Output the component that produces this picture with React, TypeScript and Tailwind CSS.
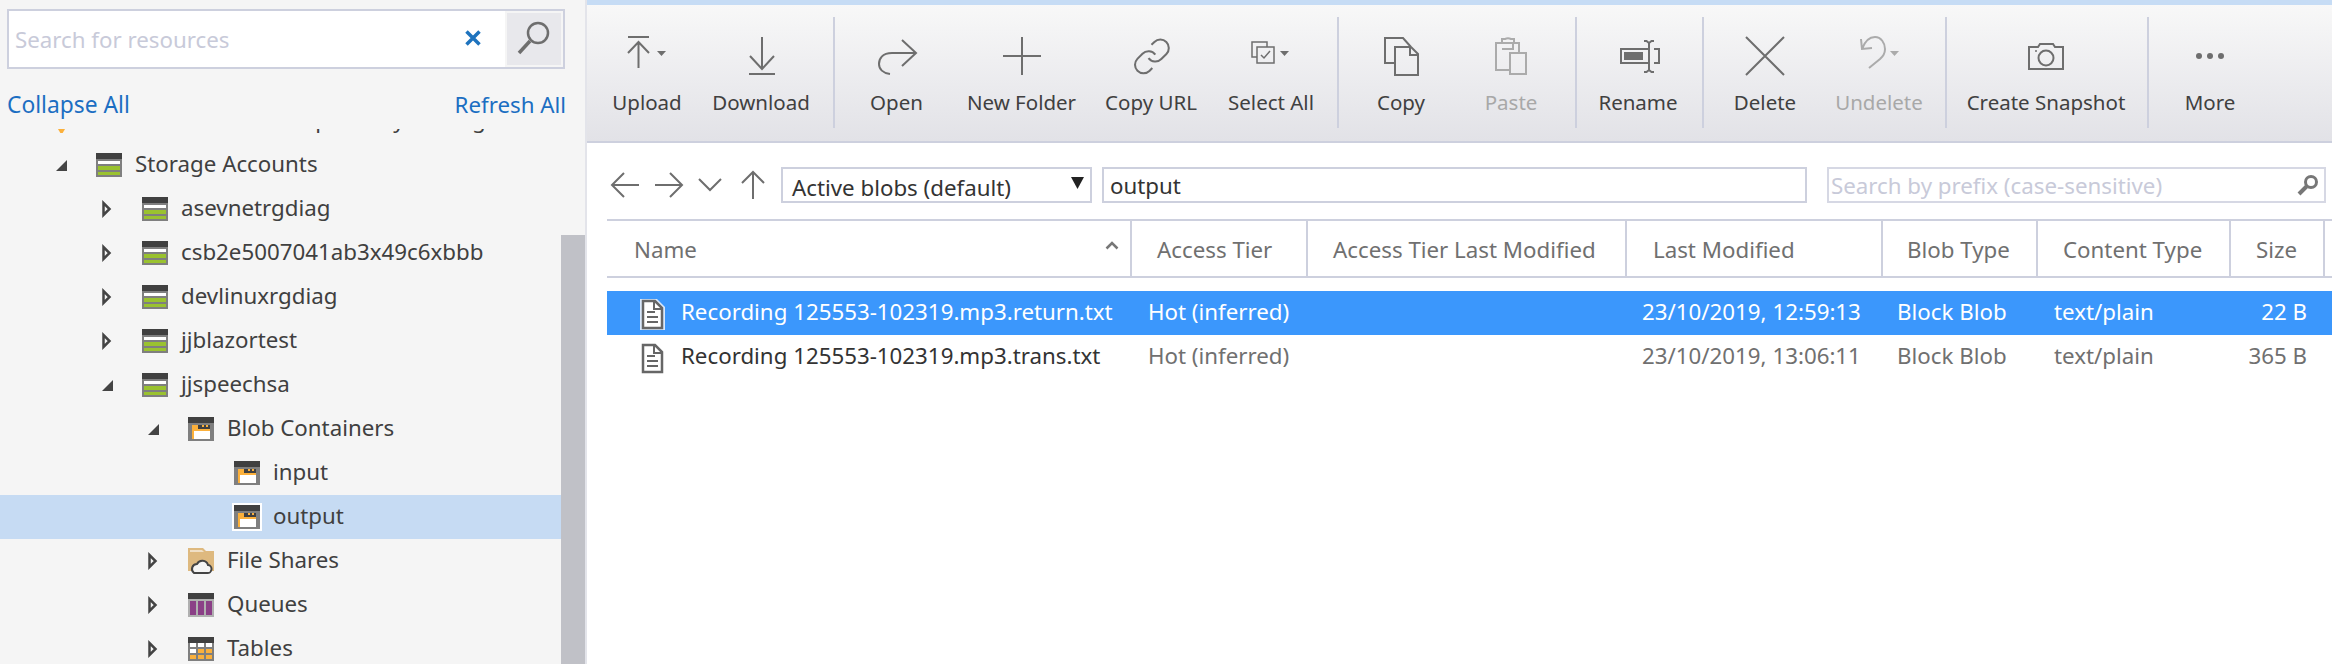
import React from 'react';

const TB = '#6e6e6e';
const DIS = '#ababab';

const Caret = ({ x, color = TB }: { x: number; color?: string }) => (
  <path d={`M${x} 17h9l-4.5 5z`} fill={color} stroke="none" />
);

const ToolIcon = ({ children, color = TB }: { children: React.ReactNode; color?: string }) => (
  <svg width="60" height="44" viewBox="0 0 60 44" fill="none" stroke={color} strokeWidth="2">
    {children}
  </svg>
);

const icons: Record<string, React.ReactNode> = {
  upload: (
    <ToolIcon>
      <path d="M11 3h21M21.5 8v26M11 19 21.5 8 32 19" />
      <Caret x={40} />
    </ToolIcon>
  ),
  download: (
    <ToolIcon>
      <path d="M31 3v32M19 22l12 13 12-13M18 40h26" />
    </ToolIcon>
  ),
  open: (
    <ToolIcon>
      <path d="M35 6l14 13-14 13M49 19H25C15 19 12 25 12 30c0 5 4 9 11 10" />
    </ToolIcon>
  ),
  folder: (
    <ToolIcon>
      <path d="M11 22h38M30 3v38" />
    </ToolIcon>
  ),
  link: (
    <ToolIcon>
      <g transform="translate(10.500 2) scale(1.7)" strokeWidth="1.2">
        <path d="M10 13a5 5 0 0 0 7.54.54l3-3a5 5 0 0 0-7.07-7.07l-1.72 1.71" />
        <path d="M14 11a5 5 0 0 0-7.54-.54l-3 3a5 5 0 0 0 7.07 7.07l1.71-1.71" />
      </g>
    </ToolIcon>
  ),
  select: (
    <ToolIcon>
      <path d="M16 23h-5V8h15v5" strokeWidth="1.5" />
      <rect x="16" y="13" width="17" height="16" strokeWidth="1.5" />
      <path d="M20 21l3 3 6-7" strokeWidth="1.5" />
      <Caret x={39} />
    </ToolIcon>
  ),
  copy: (
    <ToolIcon>
      <path d="M24 29H14V4h18l8 9M24 41V13h16l7 7v21zM39 13v8h8" />
    </ToolIcon>
  ),
  paste: (
    <ToolIcon color={DIS}>
      <path d="M29 36H15V9h23v10M21 9V5h3a5 3 0 0 1 6 0h3v4M21 15h11V9M29 19h16v21H29z" />
    </ToolIcon>
  ),
  rename: (
    <ToolIcon>
      <path d="M40 15H13v14h27M46 15h5v14h-5M41 8v29M36 7h2.500l2.500 2 2.500-2H46M36 38h2.500l2.500-2 2.500 2H46" />
      <rect x="16" y="18" width="19" height="8" fill={TB} stroke="none" />
    </ToolIcon>
  ),
  delete: (
    <ToolIcon>
      <path d="M11 3l38 38M49 3 11 41" />
    </ToolIcon>
  ),
  undelete: (
    <ToolIcon color={DIS}>
      <path d="M12 5l1 10 10-1M13 15c3-8 8-12 13-12 6 0 10 6 10 12 0 5-2 7-5 10l-11 9" />
      <Caret x={41} color={DIS} />
    </ToolIcon>
  ),
  camera: (
    <ToolIcon>
      <path d="M13 13h9l2-3h13l2 3h8v22H13z" />
      <circle cx="30" cy="24" r="7.500" />
      <circle cx="20" cy="17" r="1" fill={TB} stroke="none" />
    </ToolIcon>
  ),
  more: (
    <ToolIcon>
      <g fill={TB} stroke="none">
        <circle cx="19" cy="22" r="3" />
        <circle cx="30" cy="22" r="3" />
        <circle cx="41" cy="22" r="3" />
      </g>
    </ToolIcon>
  ),
};

const toolGroups = [
  { pad: 'border-r-2 pr-[18px]', items: [
    { label: 'Upload', icon: 'upload', w: 'w-[120px]' },
    { label: 'Download', icon: 'download', w: 'w-[108px]' },
  ] },
  { pad: 'border-r-2 pr-[12px]', items: [
    { label: 'Open', icon: 'open', w: 'w-[123px]' },
    { label: 'New Folder', icon: 'folder', w: 'w-[127px]' },
    { label: 'Copy URL', icon: 'link', w: 'w-[132px]' },
    { label: 'Select All', icon: 'select', w: 'w-[108px]' },
  ] },
  { pad: 'border-r-2 pr-[16px]', items: [
    { label: 'Copy', icon: 'copy', w: 'w-[124px]' },
    { label: 'Paste', icon: 'paste', w: 'w-[96px]', off: true },
  ] },
  { pad: 'border-r-2 pr-[3px]', items: [{ label: 'Rename', icon: 'rename', w: 'w-[122px]' }] },
  { pad: 'border-r-2 pr-[13px]', items: [
    { label: 'Delete', icon: 'delete', w: 'w-[122px]' },
    { label: 'Undelete', icon: 'undelete', w: 'w-[106px]', off: true },
  ] },
  { pad: 'border-r-2 pr-[2px]', items: [{ label: 'Create Snapshot', icon: 'camera', w: 'w-[198px]' }] },
  { pad: '', items: [{ label: 'More', icon: 'more', w: 'w-[122px]' }] },
];

const Collapsed = () => (
  <svg width="14" height="18" viewBox="0 0 14 18" fill="none" stroke="#444" strokeWidth="2.5">
    <path d="M2.500 3v12l6-6z" />
  </svg>
);

const Expanded = () => (
  <svg width="14" height="18" viewBox="0 0 14 18" fill="#444">
    <path d="M1 15 12 4v11z" />
  </svg>
);

const Bars = ({ children, body = '#7f7f7f' }: { children: React.ReactNode; body?: string }) => (
  <svg width="26" height="24" viewBox="0 0 26 24" shapeRendering="crispEdges" className="block">
    <rect width="26" height="24" fill={body} />
    <rect width="26" height="6" fill="#404040" />
    {children}
  </svg>
);

const StorageIcon = () => (
  <Bars>
    <rect x="2" y="8" width="22" height="3" fill="#fff" />
    <rect x="2" y="13" width="22" height="4" fill="#9ac22f" />
    <rect x="2" y="19" width="22" height="3" fill="#9ac22f" />
  </Bars>
);

const BlobIcon = () => (
  <Bars>
    <rect x="4" y="8" width="18" height="14" fill="#fbb03b" />
    <rect x="10" y="8" width="12" height="4" fill="#404040" />
    <rect x="14" y="8" width="2" height="2" fill="#fbb03b" />
    <rect x="18" y="8" width="2" height="2" fill="#fbb03b" />
    <rect x="6" y="14" width="16" height="8" fill="#fff" />
  </Bars>
);

const FileShareIcon = () => (
  <svg width="26" height="27" viewBox="0 0 26 27" className="block">
    <path d="M0 0h15l3 3h8v20H0z" fill="#deb97f" />
    <path d="M2 2h12l2 2H2z" fill="#fff" opacity=".55" />
    <path d="M6 25h13a4 4 0 0 0 1-8 6 6 0 0 0-11-1 5 5 0 0 0-3 9z" fill="#f5f5f5" stroke="#444" strokeWidth="2" />
  </svg>
);

const QueueIcon = () => (
  <Bars body="#b0b0b0">
    <rect x="2" y="8" width="6" height="14" fill="#8b3f87" />
    <rect x="10" y="8" width="6" height="14" fill="#8b3f87" />
    <rect x="18" y="8" width="6" height="14" fill="#8b3f87" />
  </Bars>
);

const TableIcon = () => (
  <Bars>
    {[2, 10, 18].map(x => (
      <React.Fragment key={x}>
        <rect x={x} y="6" width="6" height="4" fill="#fff" />
        <rect x={x} y="12" width="6" height="4" fill={x === 2 ? '#fff' : '#fbb03b'} />
        <rect x={x} y="18" width="6" height="4" fill="#fbb03b" />
      </React.Fragment>
    ))}
  </Bars>
);

const levelPad = ['pl-[4px]', 'pl-[50px]', 'pl-[96px]', 'pl-[142px]', 'pl-[188px]'];

type TreeRow = { label: string; level: number; arrow?: 'open' | 'closed'; icon: React.ReactNode; selected?: boolean };

const treeRows: TreeRow[] = [
  { label: 'asevnetrgdiag', level: 2, arrow: 'closed', icon: <StorageIcon /> },
  { label: 'csb2e5007041ab3x49c6xbbb', level: 2, arrow: 'closed', icon: <StorageIcon /> },
  { label: 'devlinuxrgdiag', level: 2, arrow: 'closed', icon: <StorageIcon /> },
  { label: 'jjblazortest', level: 2, arrow: 'closed', icon: <StorageIcon /> },
  { label: 'jjspeechsa', level: 2, arrow: 'open', icon: <StorageIcon /> },
  { label: 'Blob Containers', level: 3, arrow: 'open', icon: <BlobIcon /> },
  { label: 'input', level: 4, icon: <BlobIcon /> },
  { label: 'output', level: 4, icon: <BlobIcon />, selected: true },
  { label: 'File Shares', level: 3, arrow: 'closed', icon: <FileShareIcon /> },
  { label: 'Queues', level: 3, arrow: 'closed', icon: <QueueIcon /> },
  { label: 'Tables', level: 3, arrow: 'closed', icon: <TableIcon /> },
];

const columns = [
  { label: 'Name', w: 'w-[525px]', pad: 'pl-[27px]' },
  { label: 'Access Tier', w: 'w-[176px]', pad: 'pl-[25px]' },
  { label: 'Access Tier Last Modified', w: 'w-[319px]', pad: 'pl-[25px]' },
  { label: 'Last Modified', w: 'w-[256px]', pad: 'pl-[26px]' },
  { label: 'Blob Type', w: 'w-[155px]', pad: 'pl-[24px]' },
  { label: 'Content Type', w: 'w-[193px]', pad: 'pl-[25px]' },
  { label: 'Size', w: 'w-[94px]', pad: 'pl-[25px]' },
];

const blobs = [
  { name: 'Recording 125553-102319.mp3.return.txt', date: '23/10/2019, 12:59:13', size: '22 B', selected: true },
  { name: 'Recording 125553-102319.mp3.trans.txt', date: '23/10/2019, 13:06:11', size: '365 B', selected: false },
];

const FileIcon = ({ halo }: { halo: boolean }) => (
  <svg width="25" height="31" viewBox="0 0 25 31" className="mt-[4px] block" fill="none">
    {halo && <path d="M0 0h17l8 8v23H0z" fill="#d9e8fb" />}
    <path d="M3 2h12l7 7v20H3z" fill="#fff" stroke="#666" strokeWidth="2.500" />
    <path d="M14 2v8h8M7 13h8M7 18h11M7 23h11" stroke="#666" strokeWidth="2" />
  </svg>
);

export default function App() {
  return (
    <div className="flex h-[664px] w-[2332px] overflow-hidden bg-white font-['Noto_Sans',sans-serif] text-[22.3px] leading-[30px] text-[#404040]">
      {/* Explorer tree */}
      <aside className="flex w-[585px] shrink-0 flex-col bg-[#f5f5f5]">
        <div className="mx-[7px] mt-[9px] flex h-[60px] w-[558px] items-stretch border-2 border-[#cdd0de] bg-white">
          <div className="flex flex-1 items-center justify-between pl-[6px] pr-[24px]">
            <span className="mt-[2px] text-[#c8cad9]">Search for resources</span>
            <svg width="16" height="16" viewBox="0 0 16 16" stroke="#1e73be" strokeWidth="3.500" className="-mt-[2px]">
              <path d="M1.500 1.500l13 13M14.500 1.500l-13 13" />
            </svg>
          </div>
          <div className="flex w-[58px] items-center justify-center border-2 border-[#f5f5f5] bg-[#e8e8ec]">
            <svg width="36" height="36" viewBox="0 0 36 36" fill="none" stroke="#6e6e6e" className="-mt-[2px]">
              <circle cx="22" cy="13" r="10" strokeWidth="2.500" />
              <path d="M14 21 3 33" strokeWidth="3.500" />
            </svg>
          </div>
        </div>
        <div className="mx-[7px] mt-[20px] flex h-[32px] w-[559px] items-center justify-between text-[#1b6ec2]">
          <span className="text-[22.8px]">Collapse All</span>
          <span>Refresh All</span>
        </div>
        <div className="mt-[8px] flex min-h-0 flex-1 overflow-hidden">
          <div className="w-[561px] shrink-0">
            {/* row scrolled almost out of view */}
            <div className="-mt-[30px] flex h-[44px] items-center pl-[4px]">
              <span className="w-[46px]" />
              <svg width="26" height="24" viewBox="0 0 26 24" className="shrink-0">
                <path d="M8 20h7l-3.500 6z" fill="#fbb03b" />
              </svg>
              <span className="-mt-[2px] ml-[13px] whitespace-nowrap">Microsoft Azure Enterprise My Testing</span>
            </div>
            <div className="flex h-[44px] items-center pl-[50px]">
              <span className="flex w-[46px] pl-[5px]"><Expanded /></span>
              <StorageIcon />
              <span className="-mt-[2px] ml-[13px]">Storage Accounts</span>
            </div>
            {treeRows.map(row => (
              <div
                key={row.label}
                className={`flex h-[44px] items-center ${levelPad[row.level]} ${row.selected ? 'bg-[#c6dbf3]' : ''}`}
              >
                <span className="flex w-[46px] pl-[5px]">
                  {row.arrow === 'open' && <Expanded />}
                  {row.arrow === 'closed' && <Collapsed />}
                </span>
                <span className={row.selected ? 'ring-2 ring-white' : ''}>{row.icon}</span>
                <span className="-mt-[2px] ml-[13px]">{row.label}</span>
              </div>
            ))}
          </div>
          <div className="flex-1 pt-[106px]">
            <div className="h-full bg-[#c0c1c7]" />
          </div>
        </div>
      </aside>

      {/* Blob container */}
      <main className="min-w-0 flex-1 border-l-2 border-[#e3e4ea]">
        <div className="h-[5px] bg-[#c6dcf5]" />
        <div className="flex h-[138px] border-b-2 border-[#cdd0de] bg-gradient-to-b from-[#f8f8f8] to-[#e2e2e7] pt-[12px] text-[20.5px]">
          {toolGroups.map((group, i) => (
            <div key={i} className={`flex h-[111px] border-[#cdd0de] ${group.pad}`}>
              {group.items.map(item => (
                <div key={item.label} className={`flex flex-col items-center pt-[17px] ${item.w}`}>
                  {icons[item.icon]}
                  <span className={`mt-[10px] leading-[28px] whitespace-nowrap ${item.off ? 'text-[#a8a8a8]' : ''}`}>
                    {item.label}
                  </span>
                </div>
              ))}
            </div>
          ))}
        </div>

        <div className="mt-[24px] flex h-[36px] items-center pl-[23px]">
          <div className="w-[44px]">
            <svg width="30" height="26" viewBox="0 0 30 26" fill="none" stroke="#6e6e6e" strokeWidth="2">
              <path d="M29 13H2M14 1 2 13l12 12" />
            </svg>
          </div>
          <div className="w-[44px]">
            <svg width="30" height="26" viewBox="0 0 30 26" fill="none" stroke="#6e6e6e" strokeWidth="2">
              <path d="M1 13h27M16 1l12 12-12 12" />
            </svg>
          </div>
          <div className="w-[37px]">
            <svg width="24" height="14" viewBox="0 0 24 14" fill="none" stroke="#6e6e6e" strokeWidth="2">
              <path d="M1 1l11 11L23 1" />
            </svg>
          </div>
          <div className="w-[46px] pl-[6px]">
            <svg width="24" height="30" viewBox="0 0 24 30" fill="none" stroke="#6e6e6e" strokeWidth="2">
              <path d="M12 29V2M1 13 12 2l11 11" />
            </svg>
          </div>
          <div className="flex h-[36px] w-[311px] items-center justify-between border-2 border-[#cdd0de] pl-[9px] pr-[3px] text-[#333]">
            <span className="mt-[6px]">Active blobs (default)</span>
            <svg width="18" height="14" viewBox="0 0 18 14" className="-mt-[4px]"><path d="M2 1h13l-6.500 12z" fill="#222" /></svg>
          </div>
          <div className="ml-[10px] flex h-[36px] w-[705px] items-center border-2 border-[#cdd0de] pl-[6px] pt-[2px] text-[#333]">output</div>
          <div className="ml-[20px] flex h-[36px] w-[499px] items-center justify-between border-2 border-[#d6d8e4] pl-[2px] pr-[5px]">
            <span className="mt-[2px] text-[#c8cad9]">Search by prefix (case-sensitive)</span>
            <svg width="22" height="22" viewBox="0 0 22 22" fill="none" stroke="#777">
              <circle cx="14" cy="8" r="5.500" strokeWidth="3" />
              <path d="M9.500 12.500 2 20" strokeWidth="4" />
            </svg>
          </div>
        </div>

        <div className="ml-[20px] mt-[16px]">
          <div className="flex h-[59px] border-y-2 border-[#cdd0de] text-[#707070]">
            {columns.map(col => (
              <div key={col.label} className={`relative flex items-center border-r-2 border-[#cdd0de] pt-[2px] ${col.w} ${col.pad}`}>
                {col.label}
                {col.label === 'Name' && (
                  <svg width="14" height="9" viewBox="0 0 14 9" fill="none" stroke="#777" strokeWidth="2.500" className="absolute right-[11px] top-[20px]">
                    <path d="M1.500 7.500 7 2l5.500 5.500" />
                  </svg>
                )}
              </div>
            ))}
          </div>
          <div className="mt-[13px]">
            {blobs.map(blob => (
              <div
                key={blob.name}
                className={`flex h-[44px] items-center pb-[2px] ${blob.selected ? 'bg-[#3b97fc] text-white' : 'text-[#707070]'}`}
              >
                <div className={`flex w-[525px] items-center pl-[33px] ${blob.selected ? '' : 'text-[#333]'}`}>
                  <FileIcon halo={blob.selected} />
                  <span className="ml-[16px]">{blob.name}</span>
                </div>
                <div className="w-[176px] pl-[16px]">Hot (inferred)</div>
                <div className="w-[319px]" />
                <div className="w-[256px] pl-[15px]">{blob.date}</div>
                <div className="w-[155px] pl-[14px]">Block Blob</div>
                <div className="w-[193px] pl-[16px]">text/plain</div>
                <div className="w-[76px] text-right">{blob.size}</div>
              </div>
            ))}
          </div>
        </div>
      </main>
    </div>
  );
}
